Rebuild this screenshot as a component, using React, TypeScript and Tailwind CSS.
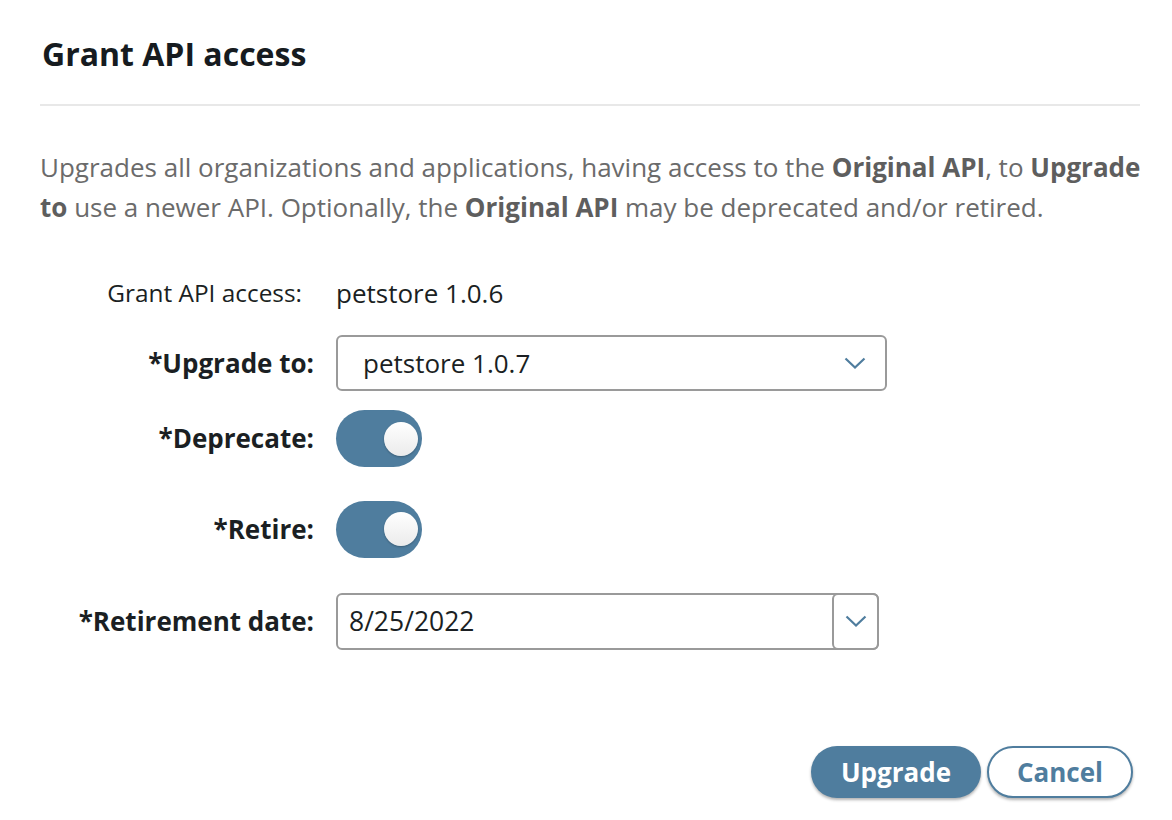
import { useState } from "react";

const font = { fontFamily: '"Open Sans", "Noto Sans", sans-serif' };

function Chevron() {
  return (
    <svg width="22" height="12" viewBox="0 0 22 12" fill="none">
      <path d="M1.5 1.5 L11 10.5 L20.5 1.5" stroke="#4f7d9e" strokeWidth="2.2" />
    </svg>
  );
}

function Toggle({ on, onClick }: { on: boolean; onClick: () => void }) {
  return (
    <button
      onClick={onClick}
      className={`flex h-[57px] w-[86px] items-center rounded-full px-[4px] ${
        on ? "justify-end bg-[#4f7d9e]" : "justify-start bg-[#c9ced3]"
      }`}
    >
      <span className="h-[34px] w-[34px] rounded-full bg-gradient-to-b from-white to-[#ebebeb] shadow-[0_1px_2px_rgba(0,0,0,0.25)]" />
    </button>
  );
}

function Row({ label, bold = true, className = "", children }: { label: string; bold?: boolean; className?: string; children: React.ReactNode }) {
  return (
    <div className={`flex items-center ${className}`}>
      <div
        className={`w-[274px] shrink-0 text-right text-[#1b1f23] ${
          bold ? "text-[26px] font-bold" : "pr-[12px] text-[24.4px]"
        }`}
      >
        {label}
      </div>
      <div className="ml-[22px] flex items-center">{children}</div>
    </div>
  );
}

export default function App() {
  const [deprecate, setDeprecate] = useState(true);
  const [retire, setRetire] = useState(true);

  return (
    <div className="min-h-screen bg-white pl-[40px] pr-[32px] pt-[36px]" style={font}>
      <h1 className="pl-[2px] text-[32px] font-bold leading-[36px] text-[#161b20]">Grant API access</h1>
      <div className="mt-[32px] h-[2px] bg-[#e8e8e8]" />

      <p className="mt-[41px] whitespace-nowrap text-[26px] leading-[40px] text-[#6b6b6b]">
        Upgrades all organizations and applications, having access to the{" "}
        <b className="text-[#5e5e5e]">Original API</b>, to <b className="text-[#5e5e5e]">Upgrade</b>
        <br />
        <b className="text-[#5e5e5e]">to</b> use a newer API. Optionally, the{" "}
        <b className="text-[#5e5e5e]">Original API</b> may be deprecated and/or retired.
      </p>

      <div className="mt-[48px]">
        <Row label="Grant API access:" bold={false} className="h-[36px]">
          <span className="text-[26px] text-[#1b1f23]">petstore 1.0.6</span>
        </Row>

        <Row label="*Upgrade to:" className="mt-[24px] h-[56px]">
          <div className="flex h-[56px] w-[551px] items-center justify-between rounded-[6px] border-2 border-[#9a9a9a] pl-[25px] pr-[19px]">
            <span className="text-[26px] text-[#1b1f23]">petstore 1.0.7</span>
            <Chevron />
          </div>
        </Row>

        <Row label="*Deprecate:" className="mt-[19px] h-[57px]">
          <Toggle on={deprecate} onClick={() => setDeprecate(!deprecate)} />
        </Row>

        <Row label="*Retire:" className="mt-[33px] h-[58px]">
          <Toggle on={retire} onClick={() => setRetire(!retire)} />
        </Row>

        <Row label="*Retirement date:" className="mt-[35px] h-[57px]">
          <div className="flex h-[57px] w-[543px] rounded-[6px] border-2 border-[#9a9a9a]">
            <div className="flex flex-1 items-center pl-[11px] text-[26.5px] text-[#1b1f23]">8/25/2022</div>
            <div className="-my-[2px] -mr-[2px] flex w-[47px] items-start justify-center rounded-[6px] border-2 border-[#9a9a9a] pt-[20px]">
              <Chevron />
            </div>
          </div>
        </Row>
      </div>

      <div className="mr-[7px] mt-[96px] flex justify-end gap-[6px]">
        <button className="h-[52px] w-[170px] rounded-full bg-[#4f7d9e] text-[26px] font-bold text-white shadow-[0_2px_3px_rgba(0,0,0,0.3)]">
          Upgrade
        </button>
        <button className="h-[52px] w-[146px] rounded-full border-2 border-[#4f7d9e] bg-white text-[26px] font-bold text-[#4f7d9e] shadow-[0_2px_3px_rgba(0,0,0,0.3)]">
          Cancel
        </button>
      </div>
    </div>
  );
}
